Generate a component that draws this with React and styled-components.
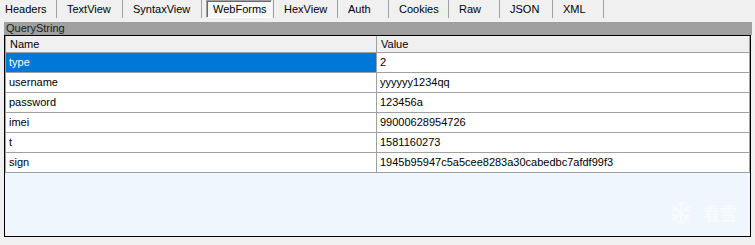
import styled, { createGlobalStyle } from 'styled-components'

// tab name and width including its separator line
const tabs = [
  ['Headers', 57],
  ['TextView', 66],
  ['SyntaxView', 79],
  ['WebForms', 72],
  ['HexView', 64],
  ['Auth', 51],
  ['Cookies', 60],
  ['Raw', 51],
  ['JSON', 53],
  ['XML', 51],
]

const rows = [
  ['type', '2'],
  ['username', 'yyyyyy1234qq'],
  ['password', '123456a'],
  ['imei', '99000628954726'],
  ['t', '1581160273'],
  ['sign', '1945b95947c5a5cee8283a30cabedbc7afdf99f3'],
]

const App = () => {
  return (
    <>
      <GlobalStyle />
      <Page>
        <TabBar>
          {tabs.map(([t, w], i) => (
            <Tab key={t} $first={i === 0} $width={w}>
              <TabLabel $active={t === 'WebForms'}>{t}</TabLabel>
            </Tab>
          ))}
        </TabBar>

        <Section>
          <SectionTitle>QueryString</SectionTitle>
          <GridBox>
            <Grid>
              <HeadCell>Name</HeadCell>
              <HeadCell>Value</HeadCell>
              {rows.map(([name, value], i) => (
                <Row key={name}>
                  <Cell $selected={i === 0}>{name}</Cell>
                  <Cell>{value}</Cell>
                </Row>
              ))}
            </Grid>
            <Empty />
            <Watermark>
              <svg width="20" height="28" viewBox="0 0 20 28" fill="none" stroke="#ffffff" strokeWidth="2" strokeLinecap="round">
                <path d="M10 3v22M2 8l16 12M18 8L2 20" />
                <path d="M7 4l3 3 3-3M7 24l3-3 3 3M2 12l4-1-1-4M18 12l-4-1 1-4M2 16l4 1-1 4M18 16l-4 1 1 4" />
              </svg>
              <span>看雪</span>
            </Watermark>
          </GridBox>
        </Section>
      </Page>
    </>
  )
}

const GlobalStyle = createGlobalStyle`
  html, body {
    margin: 0;
    background: #f0f0f0;
  }
  body {
    font-family: "Liberation Sans", Arial, sans-serif;
    font-size: 11px;
    color: #000;
  }
`

const Page = styled.div`
  width: 755px;
  height: 245px;
  overflow: hidden;
  background: #f0f0f0;
`

// tab strip on top, separators between the tabs
const TabBar = styled.div`
  display: flex;
  height: 22px;
`

const Tab = styled.div`
  box-sizing: border-box;
  width: ${({ $width }) => $width}px;
  display: flex;
  align-items: flex-start;
  height: 18px;
  padding-left: ${({ $first }) => ($first ? '5px' : '10px')};
  border-right: 1px solid #a0a0a0;
  white-space: nowrap;
`

const TabLabel = styled.span`
  line-height: 13px;
  padding: ${({ $active }) => ($active ? '2px 4px 1px 6px' : '3px 0 0 0')};
  margin: ${({ $active }) => ($active ? '0 0 0 -6px' : '0')};
  border: ${({ $active }) => ($active ? '1px solid' : 'none')};
  border-color: #a0a0a0 #ffffff #ffffff #a0a0a0;
  box-shadow: ${({ $active }) => ($active ? 'inset 1px 1px 0 #696969' : 'none')};
  background: ${({ $active }) => ($active ? '#f8f8f8' : 'transparent')};
`

const Section = styled.div`
  padding: 0 4px;
`

const SectionTitle = styled.div`
  height: 13px;
  line-height: 13px;
  padding-left: 2px;
  margin-right: -1px;
  background: #a0a0a0;
  color: #1a1a1a;
`

const GridBox = styled.div`
  position: relative;
  height: 200px;
  border: 1px solid #000;
  display: flex;
  flex-direction: column;
  background: #eff6fe;
`

const Grid = styled.div`
  display: grid;
  grid-template-columns: 371px 1fr;
  border-left: 1px solid #a0a0a0;
  background: #fff;
`

const HeadCell = styled.div`
  height: 16px;
  line-height: 16px;
  padding-left: 4px;
  background: #f0f0f0;
  border-right: 1px solid #a0a0a0;
  border-bottom: 1px solid #a0a0a0;
`

const Row = styled.div`
  display: contents;
`

const Cell = styled.div`
  height: 19px;
  line-height: 19px;
  padding-left: 3px;
  white-space: nowrap;
  border-right: 1px solid #a0a0a0;
  border-bottom: 1px solid #a0a0a0;
  background: ${({ $selected }) => ($selected ? '#0078d7' : '#ffffff')};
  color: ${({ $selected }) => ($selected ? '#ffffff' : '#000000')};
`

const Empty = styled.div`
  flex: 1;
`

const Watermark = styled.div`
  position: absolute;
  right: 13px;
  bottom: 9px;
  display: flex;
  align-items: center;
  gap: 12px;
  opacity: 0.55;
  color: #ffffff;
  font-family: "Noto Sans CJK SC", sans-serif;
  font-weight: 700;
  font-size: 17px;
  line-height: 28px;
`

export default App
